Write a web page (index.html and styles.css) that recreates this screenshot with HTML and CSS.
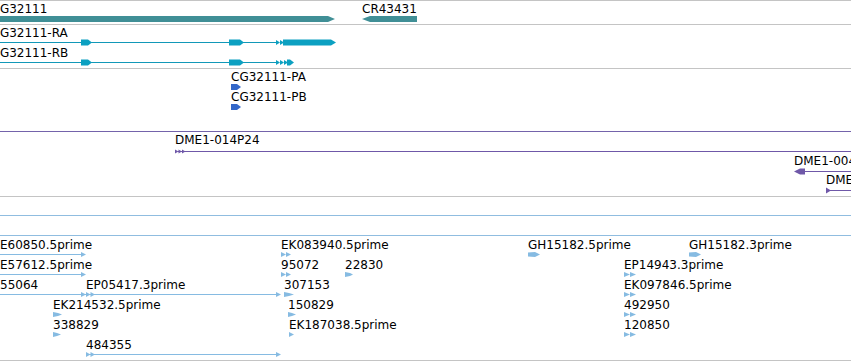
FILE: index.html
```html
<!DOCTYPE html>
<html lang="en">
<head>
    <meta charset="UTF-8">
    <meta name="viewport" content="width=device-width, initial-scale=1.0">
    <title>Genome Browser</title>
    <link rel="stylesheet" href="styles.css">
</head>
<body>
    <div class="browser">

        <!-- genes -->
        <div class="track">
            <svg class="canvas" width="851" height="23" viewBox="0 1 851 23">
                <text class="label" x="-8.5" y="13">CG32111</text>
                <polygon class="gene" points="0,16 328,16 335,19 328,22 0,22"/>
                <text class="label" x="362" y="13">CR43431</text>
                <polygon class="gene" points="362,19 370,16 417,16 417,22 370,22"/>
            </svg>
        </div>

        <!-- transcripts -->
        <div class="track">
            <svg class="canvas" width="851" height="43" viewBox="0 25 851 43">
                <text class="label" x="-8.5" y="37">CG32111-RA</text>
                <line class="tx-line" x1="0" y1="42.5" x2="277" y2="42.5"/>
                <polygon class="tx" points="81,39.5 88,39.5 92,42.5 88,45.5 81,45.5"/>
                <polygon class="tx" points="229,39.5 240,39.5 244,42.5 240,45.5 229,45.5"/>
                <polygon class="tx" points="276,40 280,42.5 276,45"/>
                <polygon class="tx" points="280,40 284,42.5 280,45"/>
                <polygon class="tx" points="283,39.5 331,39.5 336,42.5 331,45.5 283,45.5"/>

                <text class="label" x="-8.5" y="57">CG32111-RB</text>
                <line class="tx-line" x1="0" y1="62.5" x2="277" y2="62.5"/>
                <polygon class="tx" points="81,59.5 88,59.5 92,62.5 88,65.5 81,65.5"/>
                <polygon class="tx" points="229,59.5 240,59.5 244,62.5 240,65.5 229,65.5"/>
                <polygon class="tx" points="276,60 280,62.5 276,65"/>
                <polygon class="tx" points="280,60 284,62.5 280,65"/>
                <polygon class="tx" points="284,60 288,62.5 284,65"/>
                <polygon class="tx" points="287,59.5 290,59.5 294,62.5 290,65.5 287,65.5"/>
            </svg>
        </div>

        <!-- proteins -->
        <div class="track">
            <svg class="canvas" width="851" height="62" viewBox="0 69 851 62">
                <text class="label" x="231" y="81">CG32111-PA</text>
                <polygon class="protein" points="231,84 237,84 241,87 237,90 231,90"/>
                <text class="label" x="231" y="101">CG32111-PB</text>
                <polygon class="protein" points="231,104 237,104 241,107 237,110 231,110"/>
            </svg>
        </div>

        <!-- clones -->
        <div class="track track-purple">
            <svg class="canvas" width="851" height="64" viewBox="0 132 851 64">
                <text class="label" x="175" y="144">DME1-014P24</text>
                <line class="clone-line" x1="178" y1="151.5" x2="851" y2="151.5"/>
                <polygon class="clone" points="175,149.5 178.5,151.5 175,153.5"/>
                <polygon class="clone" points="178.5,149.5 182,151.5 178.5,153.5"/>
                <polygon class="clone" points="182,149.5 185.5,151.5 182,153.5"/>

                <text class="label" x="794" y="165">DME1-004F11</text>
                <line class="clone-line" x1="800" y1="171.5" x2="851" y2="171.5"/>
                <polygon class="clone" points="794,171.5 800,168.5 805,168.5 805,174.5 800,174.5"/>

                <text class="label" x="826" y="184">DME1-019A07</text>
                <line class="clone-line" x1="828" y1="190.5" x2="851" y2="190.5"/>
                <polygon class="clone" points="826,187.5 831,190.5 826,193.5"/>
            </svg>
        </div>

        <div class="track track-short"></div>
        <div class="track track-est track-shorter"></div>

        <!-- ests -->
        <div class="track track-est">
            <svg class="canvas" width="851" height="124" viewBox="0 236 851 124">
                <!-- row 1 -->
                <text class="label" x="0" y="249">E60850.5prime</text>
                <line class="est-line" x1="0" y1="254.5" x2="82" y2="254.5"/>
                <polygon class="est" points="81,252 86,254.5 81,257"/>
                <text class="label" x="281" y="249">EK083940.5prime</text>
                <polygon class="est" points="281,252 286,254.5 281,257"/>
                <polygon class="est" points="286,252 291,254.5 286,257"/>
                <text class="label" x="528" y="249">GH15182.5prime</text>
                <polygon class="est" points="528,252.5 535,252 540,254.5 535,257 528,256.5"/>
                <text class="label" x="689" y="249">GH15182.3prime</text>
                <polygon class="est" points="689,252.5 696,252 701,254.5 696,257 689,256.5"/>

                <!-- row 2 -->
                <text class="label" x="0" y="269">E57612.5prime</text>
                <line class="est-line" x1="0" y1="274.5" x2="82" y2="274.5"/>
                <polygon class="est" points="81,272 86,274.5 81,277"/>
                <text class="label" x="281" y="269">95072</text>
                <polygon class="est" points="281,272 286,274.5 281,277"/>
                <polygon class="est" points="286,272 291,274.5 286,277"/>
                <text class="label" x="345" y="269">22830</text>
                <polygon class="est" points="345,272 350,273 353,274.5 350,276 345,277"/>
                <text class="label" x="624" y="269">EP14943.3prime</text>
                <polygon class="est" points="624,272 630,274.5 624,277"/>
                <polygon class="est" points="630,272 636,274.5 630,277"/>

                <!-- row 3 -->
                <text class="label" x="0" y="289">55064</text>
                <line class="est-line" x1="0" y1="294.5" x2="277" y2="294.5"/>
                <polygon class="est" points="81,292 86,294.5 81,297"/>
                <polygon class="est" points="86,292 90.5,294.5 86,297"/>
                <polygon class="est" points="90.5,292 95,294.5 90.5,297"/>
                <polygon class="est" points="276,292 281,294.5 276,297"/>
                <text class="label" x="86" y="289">EP05417.3prime</text>
                <text class="label" x="284" y="289">307153</text>
                <polygon class="est" points="284,292 289,293 294,294.5 289,296 284,297"/>
                <text class="label" x="624" y="289">EK097846.5prime</text>
                <polygon class="est" points="624,292 630,294.5 624,297"/>
                <polygon class="est" points="630,292 636,294.5 630,297"/>

                <!-- row 4 -->
                <text class="label" x="53" y="309">EK214532.5prime</text>
                <polygon class="est" points="53,312 58,313 62,314.5 58,316 53,317"/>
                <text class="label" x="288" y="309">150829</text>
                <polygon class="est" points="288,312 292,313 296,314.5 292,316 288,317"/>
                <text class="label" x="624" y="309">492950</text>
                <polygon class="est" points="624,312 630,314.5 624,317"/>
                <polygon class="est" points="630,312 636,314.5 630,317"/>

                <!-- row 5 -->
                <text class="label" x="53" y="329">338829</text>
                <polygon class="est" points="53,332 57,333 61,334.5 57,336 53,337"/>
                <text class="label" x="289" y="329">EK187038.5prime</text>
                <polygon class="est" points="289,332 294,334.5 289,337"/>
                <text class="label" x="624" y="329">120850</text>
                <polygon class="est" points="624,332 630,334.5 624,337"/>
                <polygon class="est" points="630,332 636,334.5 630,337"/>

                <!-- row 6 -->
                <text class="label" x="86" y="349">484355</text>
                <line class="est-line" x1="86" y1="354.5" x2="277" y2="354.5"/>
                <polygon class="est" points="86,352 90.5,354.5 86,357"/>
                <polygon class="est" points="90.5,352 95,354.5 90.5,357"/>
                <polygon class="est" points="276,352 281,354.5 276,357"/>
            </svg>
        </div>

    </div>
</body>
</html>
```

FILE: styles.css
```css
body {
    margin: 0;
    background-color: #fff;
    font-family: "DejaVu Sans", Verdana, sans-serif;
}
.browser {
    width: 851px;
    overflow: hidden;
}
.track {
    border-top: 1px solid #c4c4c4;
}
.track:last-child {
    border-bottom: 1px solid #c4c4c4;
}
.track-purple {
    border-top-color: #7463ab;
}
.track-est {
    border-top-color: #90bde0;
}
.track-short {
    height: 18px;
}
.track-shorter {
    height: 19px;
}
.canvas {
    display: block;
}
.label {
    font-size: 12px;
    fill: #000;
}
.gene {
    fill: #408f96;
}
.tx {
    fill: #0ca0c1;
}
.tx-line {
    stroke: #1298b8;
    stroke-width: 1;
}
.protein {
    fill: #3468c9;
}
.clone {
    fill: #6f58a8;
}
.clone-line {
    stroke: #6f58a8;
    stroke-width: 1;
}
.est {
    fill: #86bbe2;
}
.est-line {
    stroke: #86bbe2;
    stroke-width: 1;
}
```
